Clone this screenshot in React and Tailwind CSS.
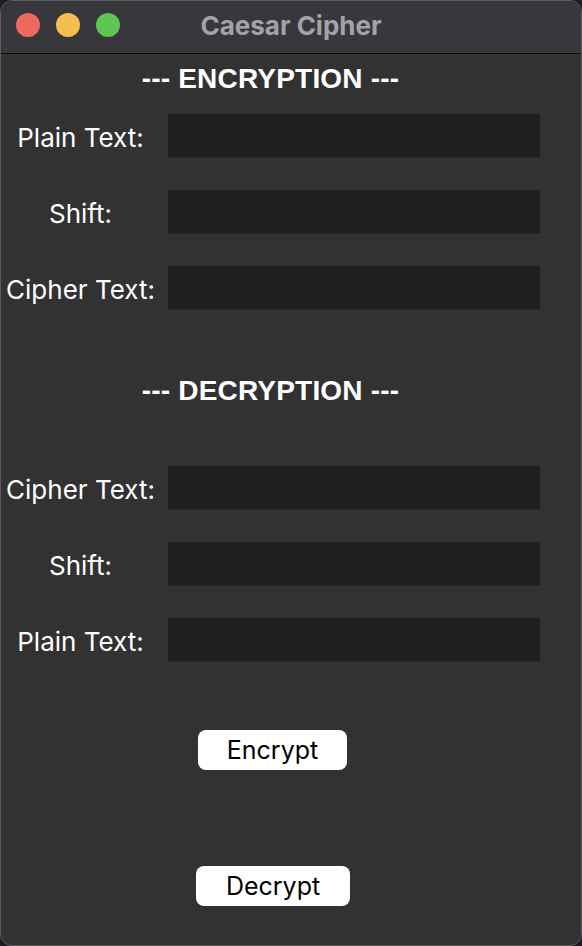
import React from "react";

const font = { fontFamily: "Inter, 'Liberation Sans', sans-serif" };
const headFont = { fontFamily: "'Liberation Sans', Arial, sans-serif" };

function Row({ label }) {
  return (
    <div className="flex items-center h-[44px]">
      <div className="w-[159px] text-center text-white text-[26px] leading-none pt-[3px]">{label}</div>
      <div className="ml-[8px] w-[372px] h-[44px] bg-[#1f1f1f] border-b border-[#2a2a2a]" />
    </div>
  );
}

export default function App() {
  return (
    <div className="w-[582px] h-[946px] bg-[#1c1c22]" style={font}>
      <div className="w-full h-full rounded-[12px] overflow-hidden border border-[#5c5c60] flex flex-col bg-[#323232]">
        <div className="relative h-[53px] bg-[#38373c] border-b border-[#0e0e0e] flex items-center shrink-0">
          <div className="absolute left-[15px] top-[12px] flex gap-[16px]">
            <div className="w-[24px] h-[24px] rounded-full bg-[#ec6a5f]" />
            <div className="w-[24px] h-[24px] rounded-full bg-[#f4bf4f]" />
            <div className="w-[24px] h-[24px] rounded-full bg-[#61c554]" />
          </div>
          <div className="w-full text-center text-[26px] font-bold text-[#a3a2a8] leading-none mt-[-3px]">
            Caesar Cipher
          </div>
        </div>
        <div className="flex flex-col">
          <div className="h-[30px] mt-[9px] flex items-center justify-center">
            <span className="text-white font-bold text-[28px] leading-none ml-[-41px] pt-[2px] tracking-[0.2px]" style={headFont}>--- ENCRYPTION ---</span>
          </div>
          <div className="mt-[21px] flex flex-col gap-[32px]">
            <Row label="Plain Text:" />
            <Row label="Shift:" />
            <Row label="Cipher Text:" />
          </div>
          <div className="h-[30px] mt-[65px] flex items-center justify-center">
            <span className="text-white font-bold text-[28px] leading-none ml-[-41px] pt-[2px] tracking-[0.2px]" style={headFont}>--- DECRYPTION ---</span>
          </div>
          <div className="mt-[61px] flex flex-col gap-[32px]">
            <Row label="Cipher Text:" />
            <Row label="Shift:" />
            <Row label="Plain Text:" />
          </div>
          <div className="mt-[68px] flex justify-center">
            <button className="ml-[-37px] w-[149px] h-[40px] bg-white rounded-[8px] text-black text-[25px] leading-none">
              Encrypt
            </button>
          </div>
          <div className="mt-[96px] flex justify-center">
            <button className="ml-[-36px] w-[154px] h-[40px] bg-white rounded-[8px] text-black text-[25px] leading-none">
              Decrypt
            </button>
          </div>
        </div>
      </div>
    </div>
  );
}
